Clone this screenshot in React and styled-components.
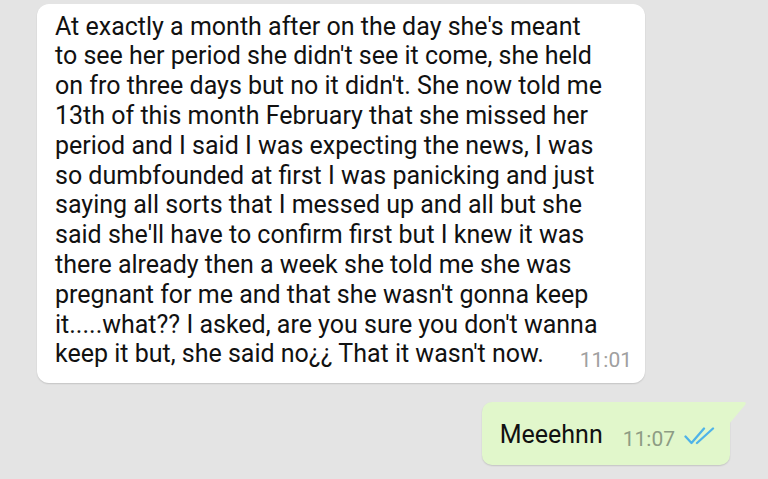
import React from "react";
import styled, { createGlobalStyle } from "styled-components";

const Global = createGlobalStyle`
  html, body {
    margin: 0;
    padding: 0;
    background: #e4e4e4;
    font-family: Roboto, "Liberation Sans", sans-serif;
  }
`;

const Screen = styled.div`
  width: 768px;
  height: 479px;
  overflow: hidden;
  background: #e4e4e4;
  display: flex;
  flex-direction: column;
  gap: 19px;
  padding-top: 4px;
  box-sizing: border-box;
`;

const Row = styled.div`
  display: flex;
  justify-content: ${(p) => (p.$out ? "flex-end" : "flex-start")};
  padding: ${(p) => (p.$out ? "0 38px 0 0" : "0 0 0 37px")};
`;

const Bubble = styled.div`
  position: relative;
  background: ${(p) => (p.$out ? "#e1f7cb" : "#ffffff")};
  border-radius: ${(p) => (p.$out ? "10px 0 10px 10px" : "12px")};
  box-shadow: 0 1px 1.5px rgba(0, 0, 0, 0.14);
  width: ${(p) => p.$w || "auto"};
  height: ${(p) => p.$h || "auto"};
  box-sizing: border-box;
  color: #111;
  font-size: 25px;
  line-height: 29.8px;
`;

const Body = styled.div`
  padding: 7.6px 13px 12px 18px;
  display: flex;
  flex-direction: column;
`;

const Line = styled.div`
  white-space: nowrap;
  display: flex;
  align-items: baseline;
  justify-content: space-between;
`;

const Out = styled.div`
  height: 100%;
  padding: 0 15px 0 18px;
  display: flex;
  align-items: center;
  gap: 20px;
  padding-top: 2px;
  box-sizing: border-box;
`;

const Tail = styled.svg`
  position: absolute;
  top: 0;
  right: -17px;
`;

const Time = styled.span`
  font-size: 21px;
  color: ${(p) => (p.$out ? "#8d9c84" : "#a0a0a0")};
  position: relative;
  top: 5px;
`;

const Status = styled.span`
  display: inline-flex;
  align-items: center;
  gap: 9px;
`;

function Ticks() {
  return (
    <svg width="31" height="18" viewBox="0 0 31 18" style={{ marginTop: 3 }}>
      <path d="M1.5 9.5 L7.5 16 L20 1.5" fill="none" stroke="#4fb3e8" strokeWidth="2.3" strokeLinecap="round" strokeLinejoin="round" />
      <path d="M13 16 L29 1.5" fill="none" stroke="#4fb3e8" strokeWidth="2.3" strokeLinecap="round" />
    </svg>
  );
}

const lines = [
  "At exactly a month after on the day she's meant",
  "to see her period she didn't see it come, she held",
  "on fro three days but no it didn't. She now told me",
  "13th of this month February that she missed her",
  "period and I said I was expecting the news, I was",
  "so dumbfounded at first I was panicking and just",
  "saying all sorts that I messed up and all but she",
  "said she'll have to confirm first but I knew it was",
  "there already then a week she told me she was",
  "pregnant for me and that she wasn't gonna keep",
  "it.....what?? I asked, are you sure you don't wanna",
];

export default function App() {
  return (
    <>
      <Global />
      <Screen>
        <Row>
          <Bubble $w="608px">
            <Body>
              {lines.map((l) => (
                <Line key={l}>{l}</Line>
              ))}
              <Line>
                <span>keep it but, she said no¿¿ That it wasn't now.</span>
                <Time>11:01</Time>
              </Line>
            </Body>
          </Bubble>
        </Row>
        <Row $out>
          <Bubble $out $h="63px">
            <Out>
              <span>Meeehnn</span>
              <Status>
                <Time $out>11:07</Time>
                <Ticks />
              </Status>
            </Out>
            <Tail width="18" height="22" viewBox="0 0 18 22">
              <path d="M0 0 H15 Q18 0 16 3 L0 22 Z" fill="#e1f7cb" />
            </Tail>
          </Bubble>
        </Row>
      </Screen>
    </>
  );
}
